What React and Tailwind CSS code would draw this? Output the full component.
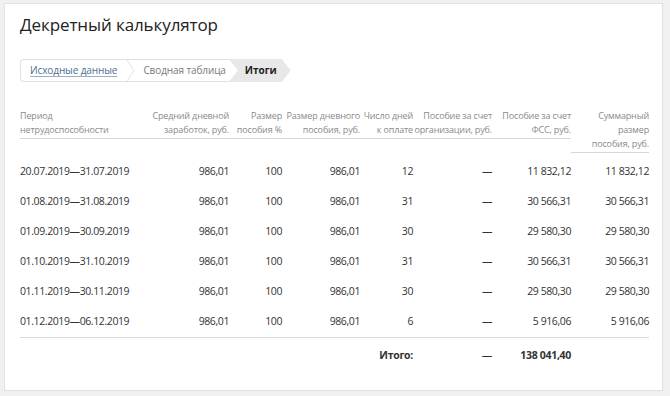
import React from "react";

const rows = [
  ["20.07.2019—31.07.2019", "986,01", "100", "986,01", "12", "—", "11 832,12", "11 832,12"],
  ["01.08.2019—31.08.2019", "986,01", "100", "986,01", "31", "—", "30 566,31", "30 566,31"],
  ["01.09.2019—30.09.2019", "986,01", "100", "986,01", "30", "—", "29 580,30", "29 580,30"],
  ["01.10.2019—31.10.2019", "986,01", "100", "986,01", "31", "—", "30 566,31", "30 566,31"],
  ["01.11.2019—30.11.2019", "986,01", "100", "986,01", "30", "—", "29 580,30", "29 580,30"],
  ["01.12.2019—06.12.2019", "986,01", "100", "986,01", "6", "—", "5 916,06", "5 916,06"],
];

const headers = [
  ["Период", "нетрудоспособности"],
  ["Средний дневной", "заработок, руб."],
  ["Размер", "пособия %"],
  ["Размер дневного", "пособия, руб."],
  ["Число дней", "к оплате"],
  ["Пособие за счет", "организации, руб."],
  ["Пособие за счет", "ФСС, руб."],
  ["Суммарный", "размер", "пособия, руб."],
];

const widths = ["w-[120px]", "w-[89px]", "w-[53px]", "w-[78px]", "w-[53px]", "w-[79px]", "w-[79px]", "w-[78px]"];

export default function App() {
  return (
    <div className="w-[670px] h-[396px] bg-[#f0f0f0] pl-[4px] pt-[3px] font-['Open_Sans',sans-serif]">
      <div className="w-[659px] h-[388px] bg-white border border-[#e2e2e2] pl-[15px] pt-[9px]">
        <h1 className="text-[17px] leading-[24px] text-[#222] font-normal tracking-[-0.1px]">Декретный калькулятор</h1>

        <div className="mt-[22px] flex h-[23px] items-stretch">
          <div className="flex items-stretch border border-[#e0e0e0] border-r-0 rounded-l-[4px] text-[10px] tracking-[-0.1px]">
            <div className="flex items-center pl-[9px] pr-[10px]">
              <a href="#" className="text-[#4d6f8f] underline underline-offset-2 decoration-[#9bb0c2]">Исходные данные</a>
            </div>
            <svg width="8" height="21" viewBox="0 0 8 21" className="shrink-0">
              <polyline points="0,0 7,10.5 0,21" fill="none" stroke="#e0e0e0" strokeWidth="1" />
            </svg>
            <div className="flex items-center pl-[8px] pr-[5px] text-[#7a7a7a]">Сводная таблица</div>
          </div>
          <div className="flex items-center bg-[#e8e8e8] pl-[16px] pr-[14px] -ml-[2px] text-[10px] font-bold text-[#222] [clip-path:polygon(0_0,calc(100%_-_9px)_0,100%_50%,calc(100%_-_9px)_100%,0_100%,9px_50%)]">
            Итоги
          </div>
        </div>

        <table className="mt-[27px] table-fixed border-collapse text-[#333]">
          <colgroup>
            {widths.map((w, i) => (
              <col key={i} className={w} />
            ))}
          </colgroup>
          <thead>
            <tr>
              {headers.map((h, i) => (
                <th key={i} className="p-0 pb-[4px] align-top font-normal">
                  <div
                    className={
                      "border-b border-[#d6d6d6] text-[9px] leading-[14px] text-[#8a8a8a] pb-[1px] whitespace-nowrap tracking-[-0.15px] " +
                      (i === 0 ? "text-left" : "text-right")
                    }
                  >
                    {h.map((l, j) => (
                      <div key={j}>{l}</div>
                    ))}
                  </div>
                </th>
              ))}
            </tr>
          </thead>
          <tbody>
            {rows.map((r, ri) => (
              <tr key={ri} className={"h-[30px] " + (ri === rows.length - 1 ? "border-b border-[#dcdcdc]" : "")}>
                {r.map((c, ci) => (
                  <td
                    key={ci}
                    className={
                      "p-0 text-[10.5px] tracking-[-0.4px] whitespace-nowrap " +
                      (ci === 0 ? "text-left" : "text-right")
                    }
                  >
                    {c}
                  </td>
                ))}
              </tr>
            ))}
            <tr className="h-[38px] text-[10.5px] font-bold tracking-[-0.3px]">
              <td className="p-0" colSpan={4}></td>
              <td className="p-0 text-right">Итого:</td>
              <td className="p-0 text-right font-normal">—</td>
              <td className="p-0 text-right">138 041,40</td>
              <td className="p-0"></td>
            </tr>
          </tbody>
        </table>
      </div>
    </div>
  );
}
